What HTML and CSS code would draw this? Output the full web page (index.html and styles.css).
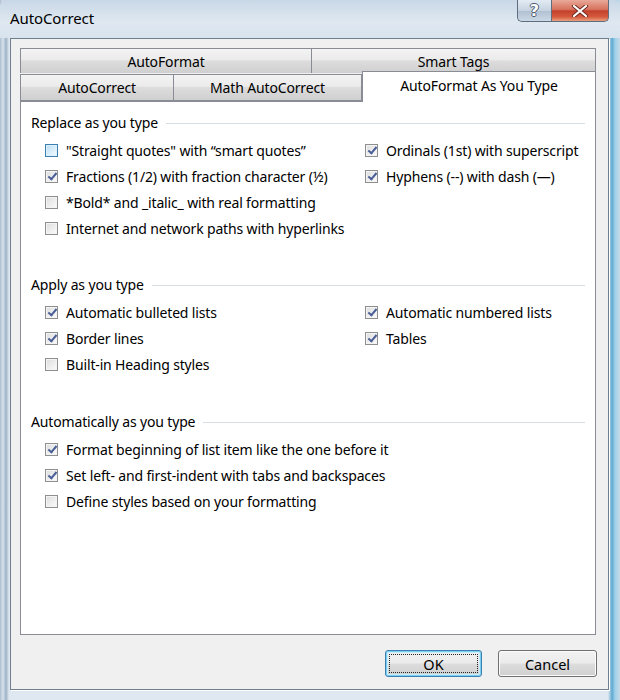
FILE: index.html
```html
<!DOCTYPE html>
<html>
<head>
<meta charset="utf-8">
<link rel="stylesheet" href="styles.css">
</head>
<body>
<div class="window">
  <div class="titlebar">
    <div class="title">AutoCorrect</div>
    <div class="controls">
      <div class="ctl help"><span>?</span></div>
      <div class="ctl close"><svg width="18" height="12" viewBox="0 0 18 12"><path d="M3 1 L15 11 M15 1 L3 11" stroke="#6a2a20" stroke-width="4" stroke-linecap="round"/><path d="M3 1 L15 11 M15 1 L3 11" stroke="#fff" stroke-width="2.2" stroke-linecap="round"/></svg></div>
    </div>
  </div>
  <div class="client">
    <div class="tabs">
      <div class="tabrow back">
        <div class="tab t-af">AutoFormat</div>
        <div class="tab t-st">Smart Tags</div>
      </div>
      <div class="tabrow front">
        <div class="tab t-ac">AutoCorrect</div>
        <div class="tab t-mac">Math AutoCorrect</div>
        <div class="tab t-sel">AutoFormat As You Type</div>
      </div>
    </div>
    <div class="panel">
      <div class="group g1">
        <div class="legend"><span>Replace as you type</span><i></i></div>
        <div class="cols">
          <div class="col left">
            <div class="item"><b class="cb hover"></b>"Straight quotes" with “smart quotes”</div>
            <div class="item"><b class="cb on"></b>Fractions (1/2) with fraction character (½)</div>
            <div class="item"><b class="cb"></b>*Bold* and _italic_ with real formatting</div>
            <div class="item"><b class="cb"></b>Internet and network paths with hyperlinks</div>
          </div>
          <div class="col right">
            <div class="item"><b class="cb on"></b>Ordinals (1st) with superscript</div>
            <div class="item"><b class="cb on"></b>Hyphens (--) with dash (—)</div>
          </div>
        </div>
      </div>
      <div class="group g2">
        <div class="legend"><span>Apply as you type</span><i></i></div>
        <div class="cols">
          <div class="col left">
            <div class="item"><b class="cb on"></b>Automatic bulleted lists</div>
            <div class="item"><b class="cb on"></b>Border lines</div>
            <div class="item"><b class="cb"></b>Built-in Heading styles</div>
          </div>
          <div class="col right">
            <div class="item"><b class="cb on"></b>Automatic numbered lists</div>
            <div class="item"><b class="cb on"></b>Tables</div>
          </div>
        </div>
      </div>
      <div class="group g3">
        <div class="legend"><span>Automatically as you type</span><i></i></div>
        <div class="cols">
          <div class="col left">
            <div class="item"><b class="cb on"></b>Format beginning of list item like the one before it</div>
            <div class="item"><b class="cb on"></b>Set left- and first-indent with tabs and backspaces</div>
            <div class="item"><b class="cb"></b>Define styles based on your formatting</div>
          </div>
        </div>
      </div>
    </div>
    <div class="buttons">
      <div class="btn ok"><span>OK</span></div>
      <div class="btn">Cancel</div>
    </div>
  </div>
</div>
</body>
</html>
```

FILE: styles.css
```css
html, body {
  margin: 0;
  padding: 0;
}
body {
  width: 620px;
  height: 700px;
  overflow: hidden;
  font-family: "Noto Sans", "Open Sans", sans-serif;
  color: #000;
}
.window {
  width: 620px;
  height: 700px;
  box-sizing: border-box;
  display: flex;
  flex-direction: column;
  background:
    radial-gradient(ellipse 160px 30px at 290px 8px, rgba(255,255,255,0.9), rgba(255,255,255,0) 100%),
    linear-gradient(90deg, #aebfd0 0px, #d7e2ec 3px, #9fb2c6 6px, #dfe8f0 9px, #dfe8f0 608px, #5fa9d0 612px, #9ed0ea 615px, #c8dbe8 620px);
}
.titlebar {
  height: 38px;
  display: flex;
  justify-content: space-between;
  align-items: flex-start;
  background: linear-gradient(180deg, #c9d8e6 0%, #dfe8f1 60%, #d8e3ee 100%);
  border-radius: 6px 6px 0 0;
}
.title {
  padding: 8px 0 0 10px;
  font-size: 15px;
  letter-spacing: -0.1px;
  color: #000;
}
.controls {
  display: flex;
  margin-right: 11px;
}
.ctl {
  height: 22px;
  box-sizing: border-box;
  border: 1px solid #5f6e7e;
  border-top: none;
  display: flex;
  align-items: center;
  justify-content: center;
}
.help {
  width: 34px;
  border-radius: 0 0 0 5px;
  border-right: none;
  background: linear-gradient(180deg, #e3ebf3 0%, #c6d3e0 50%, #b0c0d1 51%, #cbd8e5 100%);
}
.help span {
  font-family: "DejaVu Sans", sans-serif;
  font-weight: bold;
  font-size: 16px;
  color: #fff;
  text-shadow: 1px 0 0 #4b5b6e, -1px 0 0 #4b5b6e, 0 1px 0 #4b5b6e, 0 -1px 0 #4b5b6e;
}
.close {
  width: 58px;
  border-radius: 0 0 5px 0;
  background: linear-gradient(180deg, #e9a99a 0%, #d7725d 45%, #c2412b 52%, #d65a3e 80%, #e9a07f 100%);
}
.client {
  flex: 1;
  margin: 0 11px 10px 10px;
  border: 1px solid #6f7f8e;
  background: #f0f0f0;
  padding: 9px 0 0 9px;
  display: flex;
  flex-direction: column;
  box-shadow: 1px 1px 0 #ffffff;
}
.tabs {
  width: 576px;
  display: flex;
  flex-direction: column;
}
.tabrow {
  display: flex;
}
.tab {
  box-sizing: border-box;
  border: 1px solid #898c95;
  background: linear-gradient(180deg, #f3f3f3 0%, #ebebeb 45%, #dddddd 50%, #cfcfcf 100%);
  font-size: 14px;
  letter-spacing: -0.15px;
  display: flex;
  align-items: center;
  justify-content: center;
}
.back {
  height: 25px;
}
.back .tab {
  height: 25px;
  border-bottom: none;
}
.t-af { width: 292px; }
.t-st { width: 284px; border-left: none; }
.front {
  height: 28px;
  align-items: flex-end;
  position: relative;
  z-index: 2;
}
.front .tab {
  height: 27px;
}
.t-ac { width: 154px; }
.t-mac { width: 188px; border-left: none; }
.t-sel {
  width: 234px;
  height: 31px !important;
  margin-top: -4px;
  margin-bottom: -1px;
  background: #fff;
  border-bottom: none;
  padding-bottom: 4px;
}
.panel {
  width: 576px;
  height: 534px;
  box-sizing: border-box;
  border: 1px solid #898c95;
  background: #fff;
  padding: 9px 10px 0 10px;
}
.legend {
  display: flex;
  align-items: center;
  font-size: 14px;
  letter-spacing: -0.15px;
  height: 22px;
}
.legend i {
  flex: 1;
  height: 1px;
  background: #d5dfe5;
  margin-left: 8px;
  margin-top: 2px;
}
.cols {
  display: flex;
  padding-top: 4px;
}
.col.left {
  width: 320px;
  padding-left: 14px;
}
.col.right {
  flex: 1;
}
.item {
  height: 26px;
  display: flex;
  align-items: center;
  font-size: 14px;
  letter-spacing: -0.15px;
  white-space: nowrap;
}
.cb {
  width: 13px;
  height: 13px;
  box-sizing: border-box;
  border: 1px solid #8e8f8f;
  background: linear-gradient(135deg, #dcdcdc 0%, #f6f6f6 80%);
  margin-right: 8px;
  flex: none;
  position: relative;
  box-shadow: inset 0 0 0 1px #f4f4f4;
}
.cb.hover {
  border-color: #3c7fb1;
  background: linear-gradient(135deg, #b9ddf3 0%, #e9f6fd 80%);
  box-shadow: inset 0 0 0 1px #def1fc;
}
.cb.on::after {
  content: "";
  position: absolute;
  width: 3px;
  height: 7px;
  border-right: 2px solid #4a5f97;
  border-bottom: 2px solid #4a5f97;
  transform: rotate(40deg);
  transform-origin: 50% 50%;
  left: 3.5px;
  top: 0.5px;
}
.g1 { height: 162px; }
.g2 { height: 137px; }
.g3 { height: 100px; }
.buttons {
  display: flex;
  justify-content: flex-end;
  gap: 16px;
  padding: 15px 0 0 0;
  width: 577px;
}
.btn {
  width: 99px;
  height: 27px;
  box-sizing: border-box;
  border: 1px solid #707070;
  border-radius: 3px;
  background: linear-gradient(180deg, #f2f2f2 0%, #ebebeb 48%, #dddddd 52%, #cfcfcf 100%);
  font-size: 14.5px;
  display: flex;
  align-items: center;
  justify-content: center;
  box-shadow: inset 0 0 0 1px #fbfbfb;
}
.btn.ok {
  width: 97px;
  border-color: #3c7fb1;
  box-shadow: inset 0 0 0 1px #7bd0f2, inset 0 0 0 2px #c7ecfb;
  padding: 3px;
}
.btn.ok span {
  flex: 1;
  align-self: stretch;
  display: flex;
  align-items: center;
  justify-content: center;
  border: 1px dotted #222;
}
```
